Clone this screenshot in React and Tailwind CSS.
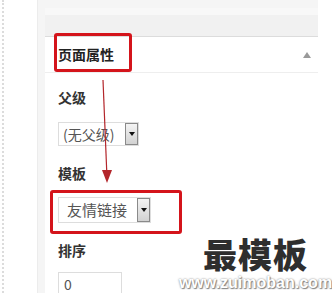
import React from 'react';

const cjk = { fontFamily: '"Noto Sans CJK SC", "Noto Sans", sans-serif' };

function DropButton({ h }) {
    return (
        <span className={`flex items-center justify-center w-[13px] ${h} border border-[#8a8a8a] bg-gradient-to-b from-[#f4f4f4] to-[#d2d2d2]`}>
            <span className="w-0 h-0 border-l-[3px] border-r-[3px] border-t-[4px] border-l-transparent border-r-transparent border-t-[#111]" />
        </span>
    );
}

export default function App() {
    return (
        <div className="relative w-[332px] h-[293px] overflow-hidden bg-white flex" style={cjk}>
            {/* dotted page edge */}
            <div className="w-[37px] shrink-0">
                <div className="ml-[2px] h-full border-l-2 border-dotted border-[#dcdcdc]" />
            </div>

            {/* sidebar column */}
            <div className="w-[281px] shrink-0 bg-[#f5f5f5] border-l border-[#ececec] pl-[7px] pt-[8px] flex flex-col">
                {/* previous box bottom */}
                <div className="h-[29px] shrink-0 flex flex-col">
                    <div className="h-[7px] bg-[#f8f8f8]" />
                    <div className="flex-1 bg-[#f1f1f1] border-b border-[#dcdcdc]" />
                </div>

                {/* page attributes box */}
                <div className="flex-1 min-h-0 overflow-hidden bg-white">
                    <div className="h-[36px] flex items-center justify-between pl-[13px] pr-[7px] border-b border-[#eeeeee]">
                        <span className="text-[14px] font-bold text-[#222]">页面属性</span>
                        <span className="w-0 h-0 border-l-[4px] border-r-[4px] border-b-[6px] border-l-transparent border-r-transparent border-b-[#9a9a9a]" />
                    </div>

                    <div className="pl-[13px] flex flex-col">
                        <div className="mt-[14px] text-[14px] font-bold text-[#333] leading-[20px]">父级</div>
                        <div className="mt-[15px] w-[81px] h-[24px] shrink-0 border border-[#dddddd] flex items-center justify-between pl-[4px]">
                            <span className="text-[14px] text-[#555]">(无父级)</span>
                            <DropButton h="h-[22px]" />
                        </div>

                        <div className="mt-[17px] text-[14px] font-bold text-[#333] leading-[20px]">模板</div>
                        <div className="mt-[14px] w-[93px] h-[26px] shrink-0 border border-[#dddddd] flex items-center justify-between pl-[8px]">
                            <span className="text-[15px] text-[#555]">友情链接</span>
                            <DropButton h="h-[24px]" />
                        </div>

                        <div className="mt-[17px] text-[14px] font-bold text-[#333] leading-[20px]">排序</div>
                        <div className="mt-[12px] w-[64px] h-[28px] shrink-0 border border-[#dddddd] flex items-start pl-[5px] pt-[3px]">
                            <span className="text-[14px] leading-[16px] text-[#555]">0</span>
                        </div>
                    </div>
                </div>
            </div>
            <div className="flex-1 bg-white" />

            {/* annotations */}
            <div className="absolute left-[54px] top-[33px] w-[78px] h-[39px] border-[3px] border-[#d4141b] rounded-[3px]" />
            <div className="absolute left-[50px] top-[190px] w-[132px] h-[44px] border-[3px] border-[#d4141b] rounded-[3px]" />
            <svg className="absolute left-0 top-0" width="332" height="293">
                <line x1="103" y1="80" x2="107" y2="178" stroke="#b3262b" strokeWidth="1.2" />
                <polygon points="102,170 112,170 107,183" fill="#b3262b" />
            </svg>

            {/* watermark */}
            <div className="absolute left-[183px] top-[236px] w-[145px] flex flex-col items-center">
                <span className="text-[34px] leading-[36px] font-black text-[#2e2e2e] tracking-[1px]">最模板</span>
                <span
                    className="mt-[3px] text-[16px] leading-[16px] font-bold text-white"
                    style={{ fontFamily: '"Liberation Sans", sans-serif', textShadow: '0 0 2px #777, 1px 1px 1px #888' }}
                >
                    www.zuimoban.com
                </span>
            </div>
        </div>
    );
}
